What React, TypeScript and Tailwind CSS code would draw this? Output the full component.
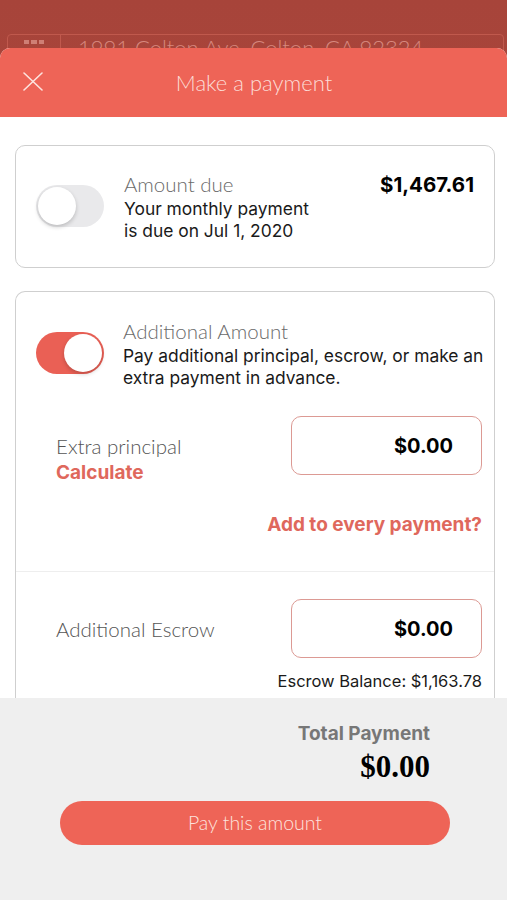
import React from 'react';

const gill = { fontFamily: 'Lato, "Open Sans", sans-serif' };
const sf = { fontFamily: 'Inter, "Noto Sans", sans-serif' };

function Toggle({ on }: { on: boolean }) {
  return (
    <div
      className={
        'relative w-[68px] h-[42px] rounded-full shrink-0 ' +
        (on ? 'bg-[#ea6055]' : 'bg-[#e9e9eb]')
      }
    >
      <div
        className={
          'absolute top-[2px] w-[38px] h-[38px] rounded-full bg-white shadow-[0_2px_4px_rgba(0,0,0,0.2)] ' +
          (on ? 'right-[2px]' : 'left-[2px]')
        }
      />
    </div>
  );
}

function MoneyInput() {
  return (
    <div className="w-[191px] h-[59px] rounded-[10px] border-[1.5px] border-[#dc9a94] flex items-center justify-end pr-[28px] bg-white">
      <span className="text-[20px] font-bold text-black" style={sf}>
        $0.00
      </span>
    </div>
  );
}

export default function App() {
  return (
    <div className="w-[507px] h-[900px] flex flex-col overflow-hidden bg-gradient-to-b from-[#a7443a] to-[#b54b40]">
      {/* backdrop: address search, mostly hidden behind the sheet */}
      <div className="h-[58px] shrink-0 pt-[34px] px-[7px] pr-[3px]">
        <div className="h-[40px] rounded-[4px] border border-[#c0594d] flex items-start">
          <div className="w-[53px] h-full border-r border-[#c0594d] flex justify-center pt-[5px]">
            <div className="grid grid-cols-3 gap-[2px] w-[20px]">
              <div className="h-[4px] bg-[#cf7f75]" />
              <div className="h-[4px] bg-[#cf7f75]" />
              <div className="h-[4px] bg-[#cf7f75]" />
              <div className="h-[4px] bg-[#cf7f75]" />
              <div className="h-[4px] bg-[#cf7f75]" />
              <div className="h-[4px] bg-[#cf7f75]" />
            </div>
          </div>
          <span className="pl-[17px] text-[22px] leading-[26px] font-light text-[#d7887e] whitespace-nowrap" style={gill}>
            1991 Colton Ave, Colton, CA 92324
          </span>
        </div>
      </div>

      {/* sheet */}
      <div className="relative z-10 -mt-[10px] flex-1 flex flex-col rounded-t-[10px] overflow-hidden bg-white">
        <div className="h-[69px] shrink-0 bg-[#ee6457] flex items-center relative">
          <div className="absolute left-[23px] top-[24px]">
            <svg width="20" height="19" viewBox="0 0 20 19">
              <path d="M1 1 L19 18 M19 1 L1 18" stroke="#fde3de" strokeWidth="1.6" strokeLinecap="round" />
            </svg>
          </div>
          <div className="flex-1 text-center text-[22px] font-light text-[#fcdcd6] pl-[1px]" style={gill}>
            Make a payment
          </div>
        </div>

        <div className="flex-1 overflow-hidden pt-[28px]">
          {/* amount due */}
          <div className="ml-[15px] mr-[12px] rounded-[10px] border border-[#cfcfcf] flex items-center pl-[20px] pr-[20px] pt-[25px] pb-[26px]">
            <Toggle on={false} />
            <div className="flex-1 pl-[20px]">
              <div className="text-[20.5px] leading-[27px] font-light text-[#6a6a6a]" style={gill}>
                Amount due
              </div>
              <div className="text-[17.4px] leading-[21.5px] text-[#1a1a1a]" style={sf}>
                Your monthly payment
                <br />
                is due on Jul 1, 2020
              </div>
            </div>
            <div className="self-start text-[20.5px] leading-[27px] font-bold text-black" style={sf}>
              $1,467.61
            </div>
          </div>

          {/* additional amount */}
          <div className="mt-[23px] ml-[15px] mr-[12px] rounded-t-[10px] border border-b-0 border-[#cfcfcf]">
            <div className="flex items-center pl-[20px] pt-[26px]">
              <Toggle on />
              <div className="flex-1 pl-[19px]">
                <div className="text-[20.5px] leading-[27px] font-light text-[#6a6a6a]" style={gill}>
                  Additional Amount
                </div>
                <div className="text-[17.4px] leading-[21.5px] text-[#1a1a1a] whitespace-nowrap" style={sf}>
                  Pay additional principal, escrow, or make an
                  <br />
                  extra payment in advance.
                </div>
              </div>
            </div>

            <div className="pl-[40px] pr-[12px] pt-[28px] pb-[34px]">
              <div className="flex justify-between items-start">
                <div className="pt-[17px]">
                  <div className="text-[20.5px] leading-[26px] font-light text-[#555]" style={gill}>
                    Extra principal
                  </div>
                  <div className="text-[19px] leading-[28px] font-bold text-[#df685c]" style={sf}>
                    Calculate
                  </div>
                </div>
                <MoneyInput />
              </div>
              <div className="mt-[26px] text-right text-[19px] leading-[24px] font-bold text-[#df685c]" style={sf}>
                Add to every payment?
              </div>
            </div>

            <div className="h-px bg-[#eeeeee]" />

            <div className="pl-[40px] pr-[12px] pt-[27px] pb-[30px]">
              <div className="flex justify-between items-center">
                <div className="text-[20.5px] leading-[26px] font-light text-[#555]" style={gill}>
                  Additional Escrow
                </div>
                <MoneyInput />
              </div>
              <div className="mt-[13px] text-right text-[16.5px] leading-[20px] text-[#1a1a1a]" style={sf}>
                Escrow Balance: $1,163.78
              </div>
            </div>
          </div>
        </div>

        {/* footer */}
        <div className="h-[202px] shrink-0 bg-[#efefef] flex flex-col pt-[24px]">
          <div className="pr-[77px] text-right">
            <div className="text-[19px] leading-[24px] font-bold text-[#777]" style={sf}>
              Total Payment
            </div>
            <div className="mt-[2px] text-[31px] leading-[38px] font-bold text-black" style={{ fontFamily: '"Liberation Serif", serif' }}>
              $0.00
            </div>
          </div>
          <div className="mt-[15px] ml-[60px] w-[390px] h-[44px] rounded-full bg-[#ee6457] flex items-center justify-center">
            <span className="text-[19.5px] font-light text-[#fde3de]" style={gill}>
              Pay this amount
            </span>
          </div>
        </div>
      </div>
    </div>
  );
}
